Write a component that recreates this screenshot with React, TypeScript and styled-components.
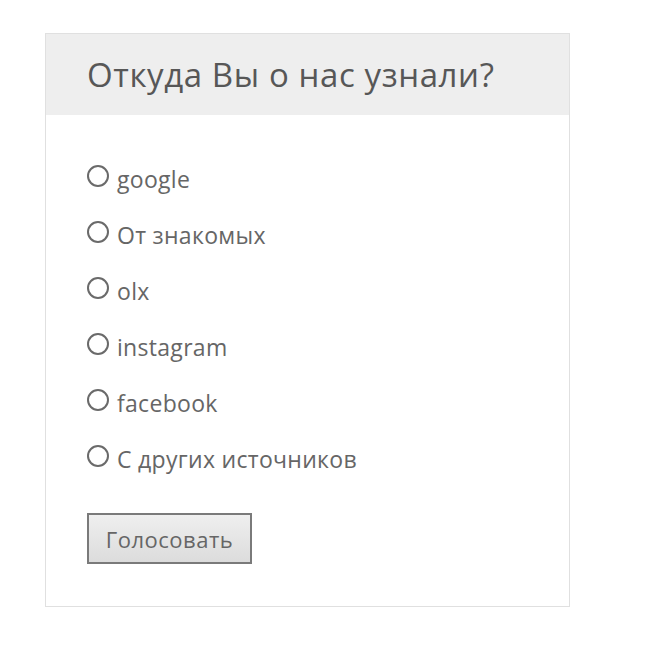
import React, { useState } from 'react';
import styled, { createGlobalStyle } from 'styled-components';

const GlobalStyle = createGlobalStyle`
  body {
    margin: 0;
    background: #fff;
    font-family: 'Open Sans', 'Noto Sans', sans-serif;
  }
`;

const Page = styled.div`
  padding: 33px 0 0 45px;
`;

const PollBox = styled.div`
  width: 523px;
  border: 1px solid #e0e0e0;
  background: #fff;
`;

const PollHeader = styled.div`
  background: #eeeeee;
  height: 81px;
  display: flex;
  align-items: center;
  padding-left: 41px;
`;

const Title = styled.h3`
  margin: 0;
  font-size: 33px;
  font-weight: 400;
  color: #575757;
  letter-spacing: 0.6px;
`;

const PollForm = styled.form`
  padding: 36px 0 42px 41px;
  display: flex;
  flex-direction: column;
`;

const Option = styled.label`
  display: flex;
  align-items: center;
  height: 56px;
  cursor: pointer;
  font-size: 23px;
  letter-spacing: 0.3px;
  color: #666;
`;

const Radio = styled.input.attrs({ type: 'radio' })`
  appearance: none;
  margin: 0 8px 0 0;
  width: 22px;
  height: 22px;
  border: 2px solid #6a6a6a;
  border-radius: 50%;
  box-sizing: border-box;
  position: relative;
  top: -3px;
  cursor: pointer;

  &:checked::after {
    content: '';
    position: absolute;
    inset: 4px;
    border-radius: 50%;
    background: #555;
  }
`;

const VoteButton = styled.button`
  align-self: flex-start;
  margin-top: 26px;
  width: 165px;
  height: 51px;
  padding: 0;
  border: 2px solid #7a7a7a;
  background: linear-gradient(#efefef, #dcdcdc);
  font-family: 'Open Sans', 'Noto Sans', sans-serif;
  font-size: 22px;
  letter-spacing: 0.5px;
  color: #666;
  cursor: pointer;
`;

const options = [
  'google',
  'От знакомых',
  'olx',
  'instagram',
  'facebook',
  'С других источников',
];

const App: React.FC = () => {
  const [choice, setChoice] = useState<string | null>(null);

  return (
    <>
      <GlobalStyle />
      <Page>
        <PollBox>
          <PollHeader>
            <Title>Откуда Вы о нас узнали?</Title>
          </PollHeader>
          <PollForm onSubmit={(e) => e.preventDefault()}>
            {options.map((opt) => (
              <Option key={opt}>
                <Radio
                  name="source"
                  checked={choice === opt}
                  onChange={() => setChoice(opt)}
                />
                {opt}
              </Option>
            ))}
            <VoteButton type="submit">Голосовать</VoteButton>
          </PollForm>
        </PollBox>
      </Page>
    </>
  );
};

export default App;
